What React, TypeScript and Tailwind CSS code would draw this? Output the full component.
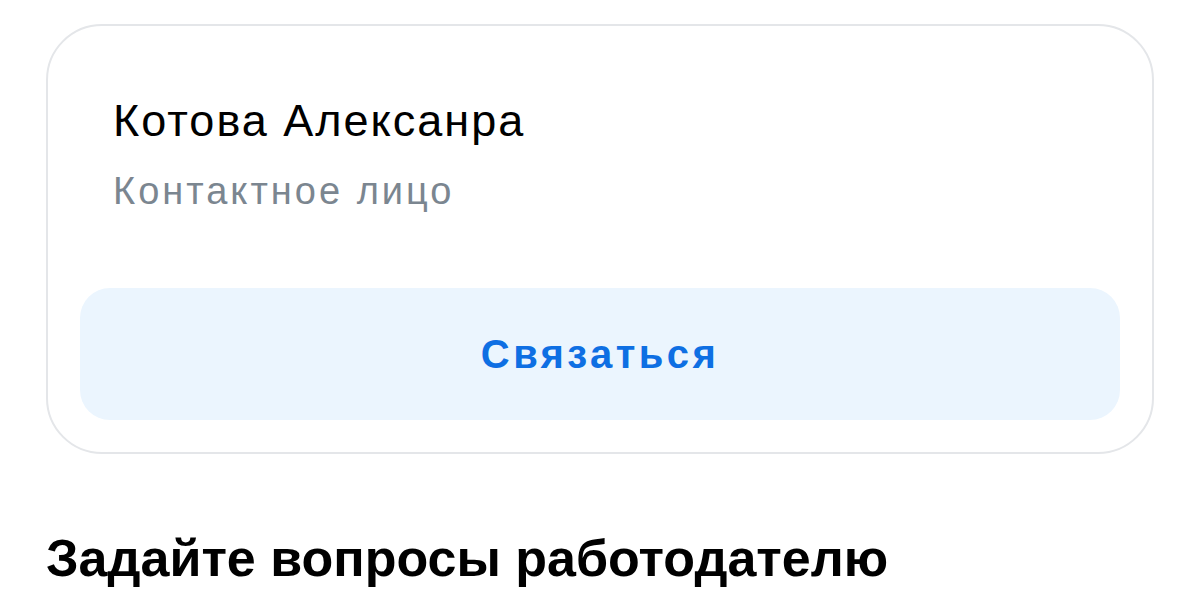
import React from 'react';

const font = { fontFamily: '"Liberation Sans", Arial, sans-serif' };

function ContactCard() {
  return (
    <div className="rounded-[56px] border-2 border-[#e4e6e9] bg-white p-8">
      <div className="px-[33px] pt-[35px]">
        <div className="text-[45px] leading-[56px] tracking-[2px] text-black">Котова Алексанра</div>
        <div className="mt-[20px] text-[38px] leading-[44px] tracking-[3px] text-[#7b8690]">Контактное лицо</div>
      </div>
      <button className="mt-[75px] flex h-[132px] w-full items-center justify-center rounded-[30px] bg-[#ebf5fe] text-[40px] font-bold tracking-[3.4px] text-[#0e6fe3]">
        Связаться
      </button>
    </div>
  );
}

export default function App() {
  return (
    <div className="h-[593px] w-[1200px] overflow-hidden bg-white px-[46px] pt-[24px]" style={font}>
      <ContactCard />
      <h2 className="mt-[74px] text-[52px] font-bold leading-[60px] text-black">Задайте вопросы работодателю</h2>
    </div>
  );
}
